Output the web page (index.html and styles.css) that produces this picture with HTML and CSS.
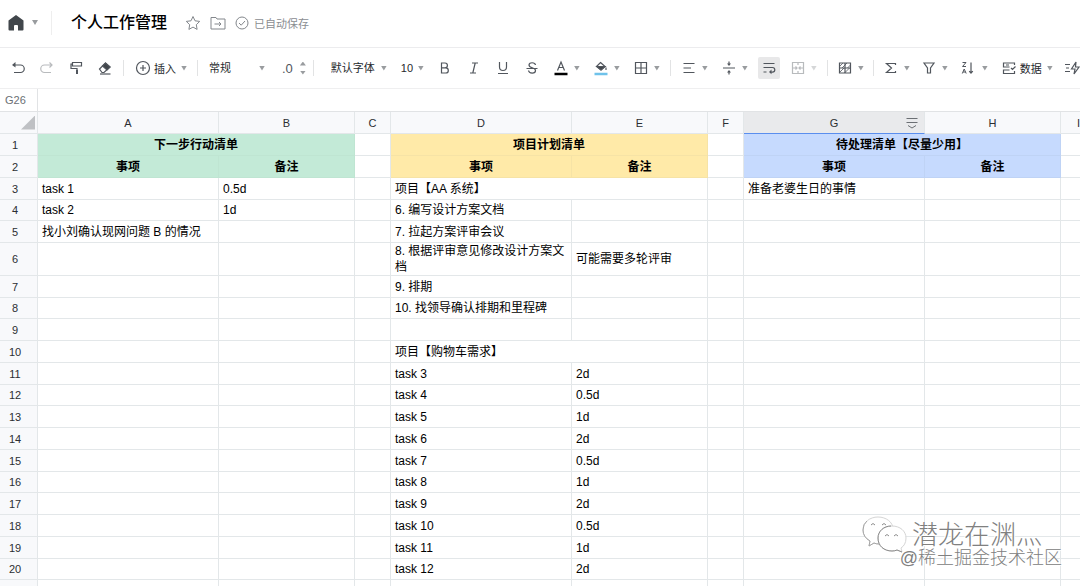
FILE: index.html
```html
<!DOCTYPE html>
<html lang="zh-CN">
<head>
    <meta charset="UTF-8">
    <meta name="viewport" content="width=device-width, initial-scale=1.0">
    <title>个人工作管理</title>
    <link rel="stylesheet" href="styles.css">
</head>
<body>
    <header class="topbar">
        <button class="home" aria-label="首页">
            <svg width="16" height="16" viewBox="0 0 16 16"><path d="M8 0 .5 5.500v9q0 1 1 1H6V11q0-1 1-1h2q1 0 1 1v4.500h4.500q1 0 1-1v-9z" fill="#41464b"/></svg>
            <span class="caret"></span>
        </button>
        <span class="topbar-line"></span>
        <h1 class="title">个人工作管理</h1>
        <button class="top-icon" aria-label="收藏">
            <svg width="16" height="16" viewBox="0 0 16 16" class="thin"><path d="m8 1.500 2 4.300 4.700.6-3.400 3.300.8 4.700L8 12.100l-4.100 2.300.8-4.700L1.300 6.400 6 5.800z"/></svg>
        </button>
        <button class="top-icon" aria-label="移动到">
            <svg width="16" height="16" viewBox="0 0 16 16" class="thin"><path d="M1 2.500h5l1 1.500h8v10H1zM4.500 9H11M9 7l2 2-2 2"/></svg>
        </button>
        <span class="saved">
            <svg width="14" height="14" viewBox="0 0 14 14" class="thin"><circle cx="7" cy="7" r="6"/><path d="m4 7 2.200 2.200L10 5"/></svg>
            已自动保存
        </span>
    </header>

    <div class="toolbar">
        <button class="tool" aria-label="撤销"><svg width="16" height="16" viewBox="0 0 16 16" class="line"><path d="M3 5h7.500a3.700 3.700 0 0 1 0 7.500H4"/><path d="M5.500 2 2 5l3.500 2.500z" fill="#51565d" stroke="none"/></svg></button>
        <button class="tool faded" aria-label="重做"><svg width="16" height="16" viewBox="0 0 16 16" class="line"><path d="M13 5H5.500a3.700 3.700 0 0 0 0 7.500H12M10.500 2.500 13 5l-2.500 2.500"/></svg></button>
        <button class="tool" aria-label="格式刷"><svg width="16" height="16" viewBox="0 0 16 16" class="line"><path d="M4.500 2.500h9v3.500h-9zM4.500 4H3v4.500h6v1"/><path d="M9 9.500V14" stroke-width="2"/></svg></button>
        <button class="tool" aria-label="清除格式"><svg width="16" height="16" viewBox="0 0 16 16" class="line"><path d="m2.500 9 6-6 4.500 4-6 5.500H5z"/><path d="m5.500 6 3-3L13 7l-3 3z" fill="#41464b"/><path d="M3 14h10.500"/></svg></button>
        <span class="sep"></span>
        <button class="tool-text">
            <svg width="16" height="16" viewBox="0 0 16 16" class="line"><circle cx="8" cy="8" r="6.500"/><path d="M8 5v6M5 8h6"/></svg>
            <span class="tool-label">插入</span><span class="caret"></span>
        </button>
        <span class="sep"></span>
        <label class="pick"><select class="pick-wide" aria-label="数字格式"><option>常规</option><option>文本</option></select><span class="caret"></span></label>
        <span class="decimals">.0
            <span class="stepper">
                <button class="step" aria-label="增加小数位"><span class="caret caret-up"></span></button>
                <button class="step" aria-label="减少小数位"><span class="caret"></span></button>
            </span>
        </span>
        <span class="sep"></span>
        <label class="pick pick-font"><select class="pick-wide" aria-label="字体"><option>默认字体</option></select><span class="caret"></span></label>
        <label class="pick"><select class="pick-size" aria-label="字号"><option>10</option><option>12</option></select><span class="caret"></span></label>
        <button class="tool" aria-label="加粗"><svg width="16" height="16" viewBox="0 0 16 16" class="line"><path d="M4.500 3H8a2.400 2.400 0 0 1 0 4.800H4.500zM4.500 7.800h4.200a2.600 2.600 0 0 1 0 5.200H4.500z"/></svg></button>
        <button class="tool" aria-label="斜体"><svg width="16" height="16" viewBox="0 0 16 16" class="line"><path d="M6 3h6M4 13h6M9.200 3l-2.400 10"/></svg></button>
        <button class="tool" aria-label="下划线"><svg width="16" height="16" viewBox="0 0 16 16" class="line"><path d="M4.500 2v5a3.500 3.500 0 0 0 7 0V2M3 13.500h10"/></svg></button>
        <button class="tool" aria-label="删除线"><svg width="16" height="16" viewBox="0 0 16 16" class="line"><path d="M11.500 5C11 2 5 2 5 5c0 3.500 6.500 2 6.500 5.500 0 3.500-6.500 3.500-7 0M2.500 8.500h11"/></svg></button>
        <button class="tool-drop" aria-label="文字颜色"><svg width="16" height="16" viewBox="0 0 16 16" class="line"><path d="M4.500 10.500 8 2l3.500 8.500M5.700 7.500h4.600"/><path d="M1.500 14h13" stroke="#000" stroke-width="2.500"/></svg><span class="caret"></span></button>
        <button class="tool-drop" aria-label="填充颜色"><svg width="16" height="16" viewBox="0 0 16 16" class="line"><path d="m7.500 2.500 4.500 4L8 10 3.500 6.500z"/><path d="M4 6.500h8L8 10z" fill="#41464b"/><path d="M13 7.500v2.500"/><path d="M1.500 14h13" stroke="#6fc2ea" stroke-width="2.500"/></svg><span class="caret"></span></button>
        <button class="tool-drop" aria-label="边框"><svg width="16" height="16" viewBox="0 0 16 16" class="line"><path d="M2.500 2.500h11v11h-11zM8 2.500v11M2.500 8h11"/></svg><span class="caret"></span></button>
        <span class="sep"></span>
        <button class="tool-drop" aria-label="水平对齐"><svg width="16" height="16" viewBox="0 0 16 16" class="line"><path d="M2.500 3.500h11M2.500 8H10M2.500 12.500h11"/></svg><span class="caret"></span></button>
        <button class="tool-drop" aria-label="垂直对齐"><svg width="16" height="16" viewBox="0 0 16 16" class="line"><path d="M2 8h12M8 1.500v3M8 11.500v3"/><path d="M6 3.500h4l-2 2.500zM6 12.500h4L8 10z" fill="#51565d" stroke="none"/></svg><span class="caret"></span></button>
        <button class="tool tool-on" aria-label="自动换行" aria-pressed="true"><svg width="16" height="16" viewBox="0 0 16 16" class="line"><path d="M2.500 3.500h11M2.500 7.500h9a2.300 2.300 0 0 1 0 4.600H9M2.500 12h3"/><path d="M10.500 9.500 8 12l2.500 2.300z" fill="#51565d" stroke="none"/></svg></button>
        <button class="tool-drop faded" aria-label="合并单元格"><svg width="16" height="16" viewBox="0 0 16 16" class="line"><path d="M2.500 2.500h11v11h-11zM8 2.500v2.500M8 11v2.500M2.500 8H7M9 8h4.500M5.500 6.500 7 8 5.500 9.500M10.500 6.500 9 8l1.500 1.500"/></svg><span class="caret"></span></button>
        <span class="sep"></span>
        <button class="tool-drop tight" aria-label="冻结"><svg width="16" height="16" viewBox="0 0 16 16" class="line"><path d="M2.500 3h11v10h-11zM8 3v10M2.500 8h11"/><path d="M2.500 6.500 6 3M5 8l5-5M10.500 8l3-3M2.500 12.500 7 8M7.500 13l5-5" stroke-width=".8"/></svg><span class="caret"></span></button>
        <span class="sep"></span>
        <button class="tool-drop tight" aria-label="求和"><svg width="16" height="16" viewBox="0 0 16 16" class="line"><path d="M12.500 5V3.500H3.500L8.500 8l-5 4.500h9V11"/></svg><span class="caret"></span></button>
        <button class="tool-drop tight" aria-label="筛选"><svg width="16" height="16" viewBox="0 0 16 16" class="line"><path d="M3 3h10L9.500 8v5h-3V8z"/></svg><span class="caret"></span></button>
        <button class="tool-drop tight" aria-label="排序"><svg width="18" height="16" viewBox="0 0 18 16" class="line"><path d="M3.500 2.500H7l-3.500 4H7M3.300 13.500 5.200 9l2 4.500M4 12h2.600" stroke-width="1"/><path d="M12 2.500V13M10.200 11.200l1.800 2 1.800-2"/></svg><span class="caret"></span></button>
        <button class="tool-text">
            <svg width="16" height="16" viewBox="0 0 16 16" class="line"><path d="M13.500 5V3h-11v4h6M2.500 7V3M8.500 10h-6v3.500h11V11M5 5h3M10 8l1.500 1.500 3-3"/></svg>
            <span class="tool-label">数据</span><span class="caret"></span>
        </button>
        <button class="tool-drop tight" aria-label="快捷操作"><svg width="16" height="16" viewBox="0 0 16 16" class="line"><path d="M11 2 6.500 9H10l-1 5 5-7h-3.500zM0 4.500h5M1 8h3M0 11.500h5"/></svg><span class="caret"></span></button>
    </div>

    <div class="formula-bar">
        <input class="cell-name" type="text" value="G26" aria-label="单元格名称">
        <input class="formula" type="text" aria-label="编辑栏">
    </div>

    <main class="sheet">
        <table class="grid">
            <colgroup>
                <col class="c-num"><col class="c-item"><col class="c-note"><col class="c-gap"><col class="c-item"><col class="c-note"><col class="c-gap"><col class="c-item"><col class="c-note"><col class="c-gap">
            </colgroup>
            <thead>
                <tr>
                    <th class="corner"><span class="corner-mark"></span></th>
                    <th>A</th><th>B</th><th>C</th><th>D</th><th>E</th><th>F</th>
                    <th class="active">G<svg class="col-menu" width="12" height="12" viewBox="0 0 12 12"><path d="M.5 1.500h11M.5 5.500h11M2 8.500 6 11l4-2.500"/></svg></th>
                    <th>H</th><th>I</th>
                </tr>
            </thead>
            <tbody>
                <tr><th>1</th><td class="head green" colspan="2">下一步行动清单</td><td></td><td class="head yellow" colspan="2">项目计划清单</td><td></td><td class="head blue" colspan="2">待处理清单【尽量少用】</td><td></td></tr>
                <tr><th>2</th><td class="head green">事项</td><td class="head green">备注</td><td></td><td class="head yellow">事项</td><td class="head yellow">备注</td><td></td><td class="head blue">事项</td><td class="head blue">备注</td><td></td></tr>
                <tr><th>3</th><td>task 1</td><td>0.5d</td><td></td><td colspan="2">项目【AA 系统】</td><td></td><td>准备老婆生日的事情</td><td></td><td></td></tr>
                <tr><th>4</th><td>task 2</td><td>1d</td><td></td><td>6. 编写设计方案文档</td><td></td><td></td><td></td><td></td><td></td></tr>
                <tr><th>5</th><td>找小刘确认现网问题 B 的情况</td><td></td><td></td><td>7. 拉起方案评审会议</td><td></td><td></td><td></td><td></td><td></td></tr>
                <tr><th>6</th><td></td><td></td><td></td><td>8. 根据评审意见修改设计方案文档</td><td>可能需要多轮评审</td><td></td><td></td><td></td><td></td></tr>
                <tr><th>7</th><td></td><td></td><td></td><td>9. 排期</td><td></td><td></td><td></td><td></td><td></td></tr>
                <tr><th>8</th><td></td><td></td><td></td><td>10. 找领导确认排期和里程碑</td><td></td><td></td><td></td><td></td><td></td></tr>
                <tr><th>9</th><td></td><td></td><td></td><td></td><td></td><td></td><td></td><td></td><td></td></tr>
                <tr><th>10</th><td></td><td></td><td></td><td colspan="2">项目【购物车需求】</td><td></td><td></td><td></td><td></td></tr>
                <tr><th>11</th><td></td><td></td><td></td><td>task 3</td><td>2d</td><td></td><td></td><td></td><td></td></tr>
                <tr><th>12</th><td></td><td></td><td></td><td>task 4</td><td>0.5d</td><td></td><td></td><td></td><td></td></tr>
                <tr><th>13</th><td></td><td></td><td></td><td>task 5</td><td>1d</td><td></td><td></td><td></td><td></td></tr>
                <tr><th>14</th><td></td><td></td><td></td><td>task 6</td><td>2d</td><td></td><td></td><td></td><td></td></tr>
                <tr><th>15</th><td></td><td></td><td></td><td>task 7</td><td>0.5d</td><td></td><td></td><td></td><td></td></tr>
                <tr><th>16</th><td></td><td></td><td></td><td>task 8</td><td>1d</td><td></td><td></td><td></td><td></td></tr>
                <tr><th>17</th><td></td><td></td><td></td><td>task 9</td><td>2d</td><td></td><td></td><td></td><td></td></tr>
                <tr><th>18</th><td></td><td></td><td></td><td>task 10</td><td>0.5d</td><td></td><td></td><td></td><td></td></tr>
                <tr><th>19</th><td></td><td></td><td></td><td>task 11</td><td>1d</td><td></td><td></td><td></td><td></td></tr>
                <tr><th>20</th><td></td><td></td><td></td><td>task 12</td><td>2d</td><td></td><td></td><td></td><td></td></tr>
                <tr><th></th><td></td><td></td><td></td><td></td><td></td><td></td><td></td><td></td><td></td></tr>
            </tbody>
        </table>
    </main>

    <div class="watermark">
        <div class="mark-name">
            <svg width="46" height="38" viewBox="0 0 46 38">
                <path d="M17 28q-3 0-5-1l-5 3 1-5Q1 21 1 14C1 6 8 1 16 1s15 5 15 12" fill="#fff" stroke="#d5d5d5"/>
                <path d="M17 28q-3 0-5-1l-5 3 1-5Q1 21 1 14 1 8 5 5" fill="none" stroke="#a5a5a5"/>
                <path d="M30 10c8 0 14 5 14 12 0 5-2 8-5 10l1 4-5-2q-2 1-5 1c-8 0-14-5-14-13 0-7 6-12 14-12z" fill="#fff" stroke="#d5d5d5"/>
                <path d="M40 36l-5-2q-2 1-5 1c-8 0-14-5-14-13 0-7 6-12 13-12" fill="none" stroke="#8c8c8c"/>
                <g fill="none" stroke="#8c8c8c"><path d="M9 9q2-3 4 0M20 9q2-3 4 0M23 20q2-3 4 0M32 20q2-3 4 0"/></g>
            </svg>
            <span>潜龙在渊灬</span>
        </div>
        <div class="mark-site">@稀土掘金技术社区</div>
    </div>
</body>
</html>
```
FILE: styles.css
```css
* { box-sizing: border-box; }
html, body { height: 100%; margin: 0; padding: 0; }
body { position: relative; display: flex; flex-direction: column; overflow: hidden; background-color: #ffffff; color: #000000; font-family: "Liberation Sans", "Noto Sans CJK SC", sans-serif; font-size: 12px; }
button, select, input { margin: 0; padding: 0; border: 0; background: none; color: inherit; font: inherit; }
svg { display: block; flex: none; }

.line { fill: none; stroke: #51565d; stroke-width: 1.2; }
.thin { fill: none; stroke: #83878c; stroke-width: 1; }
.caret { flex: none; width: 6px; height: 5px; background-color: #999c9f; clip-path: polygon(0 0, 100% 0, 50% 100%); }
.caret-up { clip-path: polygon(0 100%, 100% 100%, 50% 0); }

/* title row */
.topbar { flex: none; display: flex; align-items: center; height: 48px; padding: 0 8px 2px; border-bottom: 1px solid #ececee; }
.home { display: flex; align-items: center; gap: 8px; }
.topbar-line { width: 1px; height: 24px; margin: 0 19px 0 13px; background-color: #eeeeee; }
.title { margin: 0 18px 0 0; font-size: 16px; font-weight: 500; line-height: 24px; white-space: nowrap; }
.top-icon { margin-right: 9px; }
.saved { display: flex; align-items: center; gap: 5px; color: #8a8d91; font-size: 11px; white-space: nowrap; }

/* tools */
.toolbar { flex: none; display: flex; align-items: center; height: 41px; padding-left: 3px; border-bottom: 1px solid #efeff0; color: #26292d; font-size: 11px; overflow: hidden; }
.toolbar > * { flex: none; }
.tool { display: flex; align-items: center; justify-content: center; width: 22px; height: 22px; margin: 0 3px 0 4px; border-radius: 2px; }
.tool-on { background-color: #e8e8e9; }
.tool-drop { display: flex; align-items: center; gap: 5px; padding: 0 6px 0 7px; }
.tight { padding: 0 5px 0 6px; }
.tool-text { display: flex; align-items: center; padding: 0 6px 0 8px; }
.tool-label { margin: 0 5px 0 3px; }
.faded { opacity: 0.4; }
.sep { width: 1px; height: 16px; margin: 0 3px 0 4px; background-color: #e2e3e4; }
.pick { display: flex; align-items: center; padding: 0 6px 0 8px; }
.pick select { appearance: none; outline: none; }
.pick-wide { width: 50px; }
.pick-size { width: 17px; }
.pick-font { margin-left: 6px; }
.decimals { display: flex; align-items: center; gap: 7px; padding: 0 3px 0 11px; color: #51565d; font-size: 13px; }
.stepper { display: flex; flex-direction: column; gap: 5px; }
.step { display: flex; }
.step .caret { height: 4px; }

/* name box and formula */
.formula-bar { flex: none; display: flex; height: 23px; border-bottom: 1px solid #e1e3e5; }
.cell-name { width: 38px; padding-left: 5px; border-right: 1px solid #e1e3e5; color: #6b6f74; font-size: 11px; }
.formula { flex: 1; padding: 0 6px; }

/* sheet */
.sheet { flex: 1; min-height: 0; overflow: hidden; }
.grid { width: 1097px; table-layout: fixed; border-collapse: separate; border-spacing: 0; }
.c-num { width: 38px; }
.c-item { width: 181px; }
.c-note { width: 136px; }
.c-gap { width: 36px; }
.grid tr { height: 22px; }
.grid tbody tr:nth-child(4n) { height: 21px; }
.grid th, .grid td { padding: 0 4px; border-right: 1px solid #e3e7e9; border-bottom: 1px solid #e3e7e9; line-height: 16px; vertical-align: middle; }
.grid th { background-color: #f8f9fb; color: #2b2e32; font-size: 11px; font-weight: 400; text-align: center; }
.grid tbody th { padding-right: 11px; }
.grid .head { font-weight: 700; text-align: center; }
.grid .green { background-color: #c3ead7; border-color: #bfe5d2; }
.grid .yellow { background-color: #ffeaa8; border-color: #f6e3a6; }
.grid .blue { background-color: #c6dafe; border-color: #bfd3f5; }
.grid .active { position: relative; background-color: #e9eaec; border-bottom-color: #5a8eee; }
.grid .corner { padding: 0 2px; }
.corner-mark { display: block; width: 14px; height: 14px; margin-left: auto; background-color: #bfc1c4; clip-path: polygon(100% 0, 100% 100%, 0 100%); }
.col-menu { position: absolute; top: 5px; right: 6px; fill: none; stroke: #6b6f74; }

.watermark { position: absolute; right: 18px; bottom: 17px; color: #808080; pointer-events: none; text-shadow: -1px -1px 0 #ffffff, 1px 1px 0 #ffffff; }
.mark-name { display: flex; align-items: center; gap: 4px; height: 32px; margin-right: 20px; justify-content: flex-end; font-size: 26px; font-weight: 300; line-height: 32px; }
.mark-site { font-size: 18px; font-weight: 300; line-height: 22px; text-align: right; margin-top: -4px; }
```
